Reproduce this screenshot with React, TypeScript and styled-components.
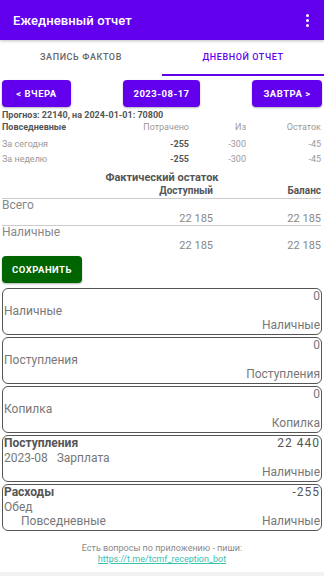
import React from "react";
import styled, { createGlobalStyle } from "styled-components";

const Global = createGlobalStyle`
  html, body { margin: 0; padding: 0; background: #fff; }
  body { font-family: Roboto, "Noto Sans", Arial, sans-serif; }
  * { box-sizing: border-box; }
`;

const Page = styled.div`
  width: 324px;
  min-height: 576px;
  display: flex;
  flex-direction: column;
`;

const AppBar = styled.header`
  height: 40px;
  background: #6200ee;
  display: flex;
  align-items: center;
  justify-content: space-between;
  padding: 0 15px 0 13px;
  color: #fff;
  box-shadow: 0 1px 3px rgba(0,0,0,0.25);
`;

const Title = styled.h1`
  margin: 0;
  font-size: 13px;
  font-weight: 500;
  letter-spacing: 0.1px;
`;

const Dots = styled.div`
  display: flex;
  flex-direction: column;
  gap: 2px;
  span { width: 3px; height: 3px; border-radius: 50%; background: #fff; display: block; }
`;

const Tabs = styled.nav`
  height: 36px;
  display: flex;
`;

const Tab = styled.div<{ $active?: boolean }>`
  flex: 1;
  display: flex;
  align-items: center;
  justify-content: center;
  font-size: 9px;
  font-weight: 500;
  letter-spacing: 0.6px;
  color: ${p => (p.$active ? "#6200ee" : "#666")};
  border-bottom: 2px solid ${p => (p.$active ? "#6200ee" : "transparent")};
`;

const NavRow = styled.div`
  display: flex;
  justify-content: space-between;
  padding: 4px 2px 0;
`;

const Btn = styled.button<{ $w: number; $green?: boolean }>`
  width: ${p => p.$w}px;
  height: 27px;
  border: none;
  border-radius: 4px;
  background: ${p => (p.$green ? "#006400" : "#6200ee")};
  color: #fff;
  font-family: inherit;
  font-size: 9.5px;
  font-weight: 700;
  letter-spacing: 0.5px;
  box-shadow: 0 1px 2px rgba(0,0,0,0.3);
  padding: 0;
`;

const Forecast = styled.div`
  padding: 2px 2px 0;
  font-size: 9px;
  font-weight: 700;
  color: #555;
  line-height: 12px;
`;

const Grid = styled.div`
  display: grid;
  grid-template-columns: 1fr 66px 57px 75px;
  padding: 0 3px 0 2px;
  font-size: 9px;
  line-height: 15.5px;
  color: #888;
`;

const Cell = styled.div<{ $right?: boolean; $bold?: boolean; $dark?: boolean }>`
  text-align: ${p => (p.$right ? "right" : "left")};
  font-weight: ${p => (p.$bold ? 700 : 400)};
  color: ${p => (p.$dark ? "#555" : "#999")};
`;

const FactTitle = styled.div`
  text-align: center;
  font-size: 11px;
  font-weight: 700;
  color: #555;
  margin-top: 3px;
  line-height: 14px;
`;

const FactGrid = styled.div`
  display: grid;
  grid-template-columns: 1fr 107px 108px;
  padding: 0 3px 0 2px;
  color: #888;
`;

const FactHead = styled.div`
  text-align: right;
  font-size: 10px;
  font-weight: 700;
  color: #555;
  line-height: 12px;
  padding-bottom: 1px;
  border-bottom: 1.5px solid #ccc;
`;

const FactLabel = styled.div`
  grid-column: 1 / -1;
  font-size: 12px;
  line-height: 13px;
  color: #888;
`;

const FactVal = styled.div<{ $line?: boolean }>`
  text-align: right;
  font-size: 11px;
  line-height: 13px;
  color: #888;
  border-bottom: ${p => (p.$line ? "1.5px solid #ccc" : "1.5px solid transparent")};
`;

const SaveRow = styled.div`
  padding: 3px 2px 5px;
`;

const Cards = styled.div`
  display: flex;
  flex-direction: column;
  gap: 2px;
  padding: 0 2px;
`;

const Card = styled.div`
  border: 1.5px solid #555;
  border-radius: 6px;
  padding: 0 1px 0 1px;
  height: 47px;
  display: flex;
  flex-direction: column;
  justify-content: center;
  font-size: 12px;
  line-height: 14.5px;
  color: #777;
`;

const Line = styled.div`
  display: flex;
  justify-content: space-between;
  align-items: baseline;
`;

const Right = styled.span`
  margin-left: auto;
`;

const Strong = styled.span`
  font-weight: 700;
  color: #555;
`;

const Amount = styled.span`
  margin-left: auto;
  color: #555;
  letter-spacing: 1px;
`;

const Indent = styled.span`
  padding-left: 17px;
`;

const Footer = styled.footer`
  margin-top: 12px;
  text-align: center;
  font-size: 9px;
  line-height: 11px;
  color: #888;
`;

const Link = styled.a`
  color: #3cc0b0;
  text-decoration: underline;
`;

const BottomBar = styled.div`
  margin-top: auto;
  height: 4px;
  background: #f2f2f2;
`;

export default function App() {
  return (
    <Page>
      <Global />
      <AppBar>
        <Title>Ежедневный отчет</Title>
        <Dots><span /><span /><span /></Dots>
      </AppBar>
      <Tabs>
        <Tab>ЗАПИСЬ ФАКТОВ</Tab>
        <Tab $active>ДНЕВНОЙ ОТЧЕТ</Tab>
      </Tabs>
      <NavRow>
        <Btn $w={69}>&lt; ВЧЕРА</Btn>
        <Btn $w={77}>2023-08-17</Btn>
        <Btn $w={70}>ЗАВТРА &gt;</Btn>
      </NavRow>
      <Forecast>
        Прогноз: 22140, на 2024-01-01: 70800
        <br />
        Повседневные
      </Forecast>
      <Grid style={{ marginTop: -13 }}>
        <Cell />
        <Cell $right>Потрачено</Cell>
        <Cell $right>Из</Cell>
        <Cell $right>Остаток</Cell>
      </Grid>
      <Grid style={{ marginTop: 1 }}>
        <Cell>За сегодня</Cell>
        <Cell $right $bold $dark>-255</Cell>
        <Cell $right>-300</Cell>
        <Cell $right>-45</Cell>
        <Cell>За неделю</Cell>
        <Cell $right $bold $dark>-255</Cell>
        <Cell $right>-300</Cell>
        <Cell $right>-45</Cell>
      </Grid>
      <FactTitle>Фактический остаток</FactTitle>
      <FactGrid>
        <FactHead />
        <FactHead>Доступный</FactHead>
        <FactHead>Баланс</FactHead>
        <FactLabel>Всего</FactLabel>
        <FactVal $line />
        <FactVal $line>22 185</FactVal>
        <FactVal $line>22 185</FactVal>
        <FactLabel>Наличные</FactLabel>
        <FactVal />
        <FactVal>22 185</FactVal>
        <FactVal>22 185</FactVal>
      </FactGrid>
      <SaveRow>
        <Btn $w={80} $green>СОХРАНИТЬ</Btn>
      </SaveRow>
      <Cards>
        <Card>
          <Line><Right>0</Right></Line>
          <Line>Наличные</Line>
          <Line><Right>Наличные</Right></Line>
        </Card>
        <Card>
          <Line><Right>0</Right></Line>
          <Line>Поступления</Line>
          <Line><Right>Поступления</Right></Line>
        </Card>
        <Card>
          <Line><Right>0</Right></Line>
          <Line>Копилка</Line>
          <Line><Right>Копилка</Right></Line>
        </Card>
        <Card>
          <Line><Strong>Поступления</Strong><Amount>22 440</Amount></Line>
          <Line>2023-08&nbsp;&nbsp; Зарплата</Line>
          <Line><Right>Наличные</Right></Line>
        </Card>
        <Card>
          <Line><Strong>Расходы</Strong><Amount>-255</Amount></Line>
          <Line>Обед</Line>
          <Line><Indent>Повседневные</Indent><Right>Наличные</Right></Line>
        </Card>
      </Cards>
      <Footer>
        Есть вопросы по приложению - пиши:
        <br />
        <Link href="#">https://t.me/tcmf_reception_bot</Link>
      </Footer>
      <BottomBar />
    </Page>
  );
}
